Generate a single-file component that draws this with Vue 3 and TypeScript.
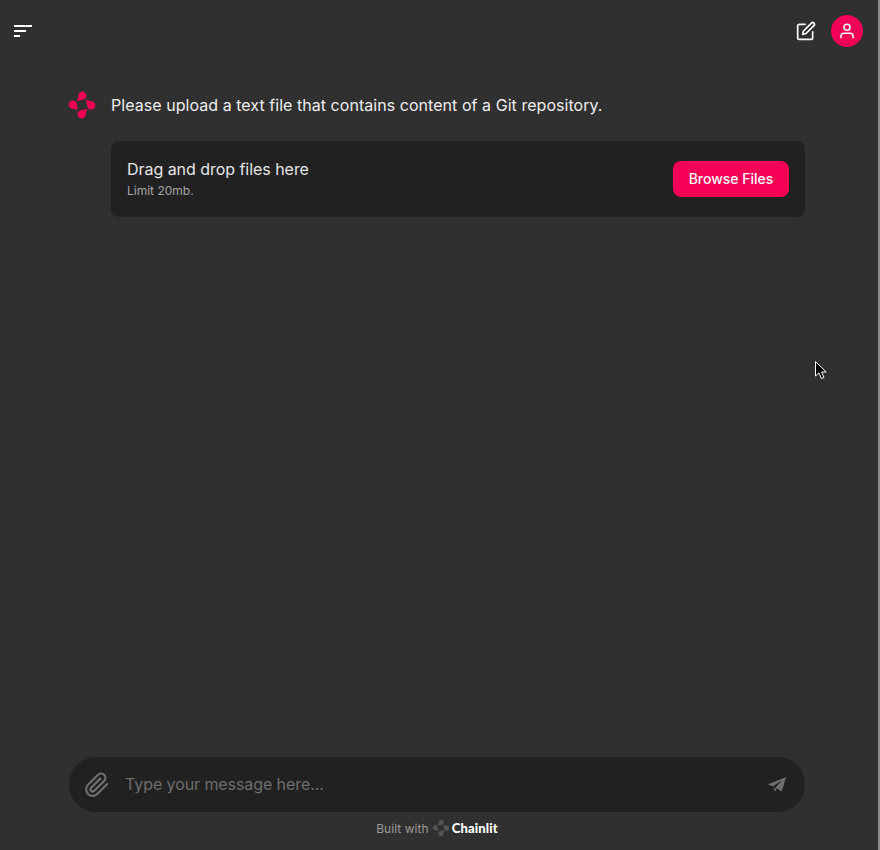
<script setup lang="ts">
const placeholder = 'Type your message here...'
const petalAngles = [0, 90, 180, 270]
const petal = 'M7.6 9.2C8.6 7.6 8.9 5.6 9.3 3.6A4.1 4.1 0 1 1 15.4 7.3C13.2 8.2 9.6 8.2 7.6 9.2Z'
</script>

<template>
  <div class="page">
    <header class="topbar">
      <button class="icon-btn menu" aria-label="Open sidebar">
        <span class="bar bar-lg"></span>
        <span class="bar bar-md"></span>
        <span class="bar bar-sm"></span>
      </button>
      <div class="top-actions">
        <button class="icon-btn" aria-label="New chat">
          <svg width="20" height="20" viewBox="0 0 24 24" fill="none" stroke="#fff" stroke-width="2" stroke-linecap="round" stroke-linejoin="round">
            <path d="M11 4H4a2 2 0 0 0-2 2v14a2 2 0 0 0 2 2h14a2 2 0 0 0 2-2v-7" />
            <path d="M18.5 2.5a2.12 2.12 0 0 1 3 3L12 15l-4 1 1-4 9.5-9.5z" />
          </svg>
        </button>
        <div class="avatar">
          <svg width="18" height="18" viewBox="0 0 24 24" fill="none" stroke="#fff" stroke-width="2" stroke-linecap="round" stroke-linejoin="round">
            <path d="M20 21v-2a4 4 0 0 0-4-4H8a4 4 0 0 0-4 4v2" />
            <circle cx="12" cy="7" r="4" />
          </svg>
        </div>
      </div>
    </header>

    <main class="thread">
      <div class="message">
        <svg class="logo" width="28" height="28" viewBox="-1 -1 28 28" fill="#f50057">
          <path v-for="a in petalAngles" :key="a" :d="petal" :transform="`rotate(${a} 13 13)`" />
        </svg>
        <p class="message-text">Please upload a text file that contains content of a Git repository.</p>
      </div>

      <div class="dropzone">
        <div class="dropzone-copy">
          <div class="dropzone-title">Drag and drop files here</div>
          <div class="dropzone-limit">Limit 20mb.</div>
        </div>
        <button class="browse">Browse Files</button>
      </div>
    </main>

    <div class="composer">
      <svg class="clip" width="26" height="26" viewBox="0 0 24 24" fill="none" stroke="#6f6f6f" stroke-width="2" stroke-linecap="round" stroke-linejoin="round">
        <path d="M21.4 11.05 12.2 20.25a6 6 0 0 1-8.49-8.49l9.2-9.19a4 4 0 0 1 5.66 5.66l-9.2 9.19a2 2 0 0 1-2.83-2.83l8.49-8.48" />
      </svg>
      <span class="placeholder">{{ placeholder }}</span>
      <svg class="send" width="20" height="20" viewBox="0 0 20 20" fill="#6f6f6f">
        <path d="M19 2.2 0.8 9.2 5.8 11.6 15.4 5 8.6 12.6 8.6 12.8 14.8 16.4Z" />
        <path d="M6.6 12.4 8 16.6 9.8 14Z" />
      </svg>
    </div>

    <footer class="built">
      <span>Built with</span>
      <svg class="built-logo" width="16" height="16" viewBox="0 0 26 26" fill="#555555">
        <path v-for="a in petalAngles" :key="a" :d="petal" :transform="`rotate(${a} 13 13)`" />
      </svg>
      <strong>Chainlit</strong>
    </footer>

    <div class="edge"></div>

    <svg class="cursor" width="12" height="19" viewBox="0 0 12 19">
      <path d="M0.5 0.5V15L4 11.8 6.4 17.6 9 16.5 6.6 11H11.2Z" fill="#000" stroke="#fff" stroke-width="1" />
    </svg>
  </div>
</template>

<style>
html,
body {
  margin: 0;
  background: #303030;
}
</style>

<style scoped>
.page {
  position: relative;
  width: 880px;
  height: 850px;
  overflow: hidden;
  display: flex;
  flex-direction: column;
  box-sizing: border-box;
  background: #303030;
  font-family: Inter, "Liberation Sans", sans-serif;
  color: #f2f2f2;
}

.topbar {
  height: 62px;
  flex: none;
  display: flex;
  align-items: center;
  justify-content: space-between;
  padding: 0 17px 0 14px;
}

.icon-btn {
  padding: 0;
  border: 0;
  background: none;
  display: flex;
}

.menu {
  flex-direction: column;
  gap: 3px;
  margin-top: -1px;
}

.bar {
  display: block;
  height: 2px;
  background: #fff;
}

.bar-lg { width: 18px; }
.bar-md { width: 12px; }
.bar-sm { width: 6px; }

.top-actions {
  display: flex;
  align-items: center;
  gap: 15px;
}

.avatar {
  width: 32px;
  height: 32px;
  border-radius: 50%;
  background: #f50057;
  display: flex;
  align-items: center;
  justify-content: center;
}

.thread {
  flex: 1;
  padding: 29px 75px 0 68px;
}

.message {
  display: flex;
  align-items: center;
  gap: 15px;
}

.logo {
  flex: none;
}

.message-text {
  margin: 0;
  font-size: 16px;
  line-height: 28px;
  letter-spacing: 0.045px;
  color: #eeeeee;
}

.dropzone {
  margin: 22px 0 0 43px;
  height: 76px;
  box-sizing: border-box;
  padding: 0 16px;
  display: flex;
  align-items: center;
  justify-content: space-between;
  border-radius: 8px;
  background: #212121;
}

.dropzone-title {
  margin-bottom: 2px;
  font-size: 16px;
  line-height: 22px;
  letter-spacing: -0.04px;
  color: #e6e6e6;
}

.dropzone-limit {
  font-size: 12px;
  line-height: 18px;
  color: #a6a6a6;
}

.browse {
  height: 36px;
  width: 116px;
  padding: 0 0 1px;
  border: 0;
  border-radius: 8px;
  background: #f50057;
  color: #fff;
  font-family: inherit;
  font-size: 14px;
  font-weight: 500;
}

.composer {
  flex: none;
  margin: 0 75px 0 69px;
  height: 55px;
  box-sizing: border-box;
  padding: 0 18px 0 15px;
  display: flex;
  align-items: center;
  border-radius: 27px;
  background: #212121;
}

.clip {
  flex: none;
}

.placeholder {
  flex: 1;
  margin: -1px 0 0 15px;
  font-size: 16px;
  letter-spacing: -0.08px;
  color: #6e6e6e;
}

.send {
  flex: none;
}

.built {
  flex: none;
  height: 38px;
  box-sizing: border-box;
  padding: 0 6px 6px 0;
  display: flex;
  align-items: center;
  justify-content: center;
  font-size: 12px;
  letter-spacing: 0.05px;
  color: #9a9a9a;
}

.built-logo {
  margin: 0 3px 0 4px;
}

.built strong {
  font-family: Lato, sans-serif;
  font-weight: 900;
  font-size: 13px;
  letter-spacing: 0.15px;
  color: #fff;
}

.edge {
  position: absolute;
  top: 0;
  right: 0;
  bottom: 0;
  width: 2px;
  background: #8c8c8c;
}

.cursor {
  position: absolute;
  left: 815px;
  top: 361px;
}
</style>
